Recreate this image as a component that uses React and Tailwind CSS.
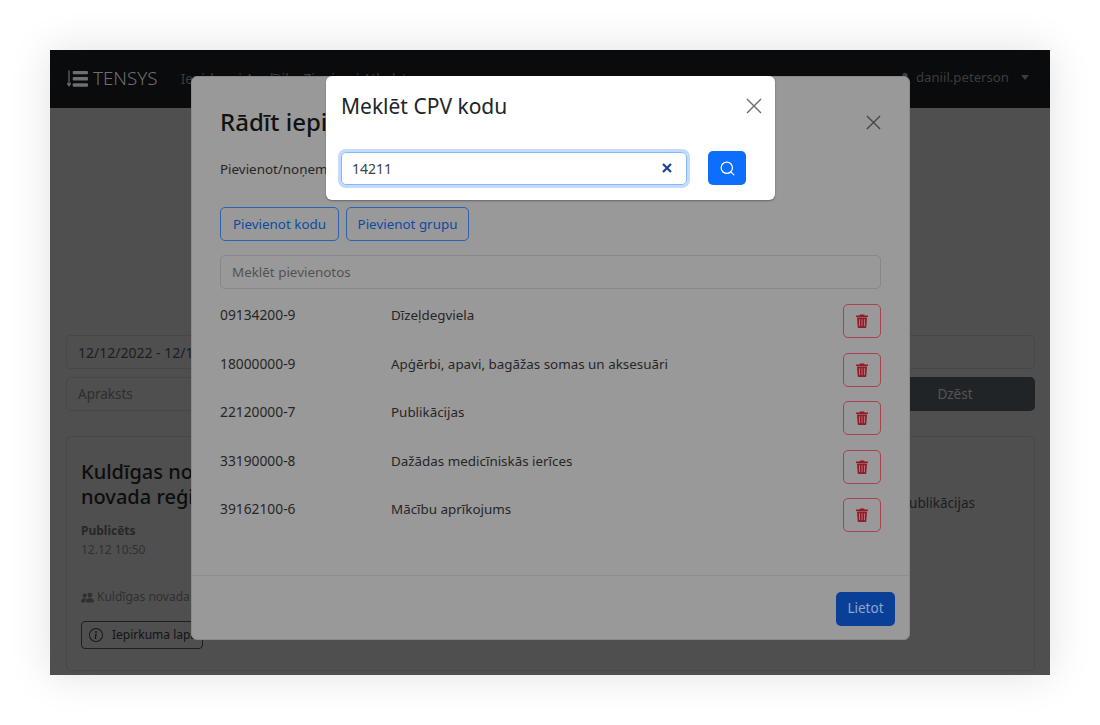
import React from 'react';
import { Search } from 'lucide-react';
import { BsPeopleFill, BsInfoCircle, BsPersonFill } from 'react-icons/bs';

const codes = [
  ['09134200-9', 'Dīzeļdegviela'],
  ['18000000-9', 'Apģērbi, apavi, bagāžas somas un aksesuāri'],
  ['22120000-7', 'Publikācijas'],
  ['33190000-8', 'Dažādas medicīniskās ierīces'],
  ['39162100-6', 'Mācību aprīkojums'],
];

function CloseIcon({ className }) {
  return (
    <svg viewBox="0 0 16 16" className={className} fill="none" stroke="currentColor" strokeWidth="1.4">
      <path d="M1 1l14 14M15 1L1 15" />
    </svg>
  );
}

function TrashIcon() {
  return (
    <svg viewBox="0 0 12 14" className="w-[12px] h-[14px]">
      <path d="M4 0.5h4l.6 1H12V3H0V1.5h3.4z" fill="#941a28" />
      <path d="M1 3.6h10l-.7 9.4a1 1 0 0 1-1 1H2.7a1 1 0 0 1-1-1z" fill="#941a28" />
      <path d="M3.5 5.2v7M6 5.2v7M8.5 5.2v7" stroke="#a8737a" strokeWidth="1" />
    </svg>
  );
}

function Logo() {
  return (
    <div className="flex items-center gap-[5px] text-[#6e6f70]">
      <svg viewBox="0 0 22 18" className="w-[21px] h-[18px]" fill="currentColor">
        <path d="M1.5 0h1.2v14l1.3-1.6v2L2.1 17 .2 14.4v-2l1.3 1.6z" />
        <rect x="6" y="0.5" width="16" height="3.6" rx="1" />
        <rect x="6" y="7" width="16" height="3.6" rx="1" />
        <rect x="6" y="13.5" width="16" height="3.6" rx="1" />
      </svg>
      <span className="text-[18.8px] leading-none font-light mt-[-2px]">TENSYS</span>
    </div>
  );
}

function Background() {
  return (
    <div className="flex flex-col h-full text-[13.5px]">
      <div className="h-[58px] bg-[#0a0b0d] flex items-center pl-[17px] pr-[21px] shrink-0">
        <Logo />
        <span className="ml-[23px] text-[#3c3d3f] whitespace-nowrap">Iepirkumi Analītika Ziņojumi Atbalsts</span>
        <span className="ml-auto flex items-center gap-[4px] text-[#3c3d3f] mt-[-2px] text-[13.2px]">
          <BsPersonFill className="w-[14px] h-[14px]" />
          daniil.peterson
          <span className="ml-[8px] w-0 h-0 border-x-[4px] border-x-transparent border-t-[5px] border-t-[#3c3d3f]" />
        </span>
      </div>
      <div className="flex-1 pt-[227px] pl-[16px] pr-[15px] pb-[4px] flex flex-col">
        <div className="h-[34px] border border-[#474747] rounded-[5px] flex items-center px-[11px] text-[14px] text-[#1d1d1d]">12/12/2022 - 12/12/2022</div>
        <div className="mt-[8px] flex gap-[8px]">
          <div className="flex-1 h-[34px] border border-[#474747] rounded-[5px] flex items-center px-[11px] text-[#2e2e2e]">Apraksts</div>
          <div className="w-[160px] h-[34px] rounded-[5px] bg-[#212426] flex items-center justify-center text-[#555657]">Dzēst</div>
        </div>
        <div className="mt-[25px] flex-1 border border-[#474747] rounded-[5px] pt-[22px] px-[14px] relative flex">
          <div className="flex-1">
            <h2 className="text-[20px] leading-[25px] font-medium text-[#0d0d0d]">Kuldīgas novada pašvaldība<br />novada reģionālā</h2>
            <div className="mt-[12px] text-[12px] leading-[19px] font-bold text-[#272727]">Publicēts</div>
            <div className="text-[12px] leading-[19px] text-[#2f2f2f]">12.12 10:50</div>
            <div className="mt-[29px] flex items-center gap-[3px] text-[12px] text-[#2f2f2f]">
              <BsPeopleFill className="w-[13px] h-[13px]" />
              Kuldīgas novada pašvaldība
            </div>
            <div className="mt-[15px] w-[122px] h-[28px] border border-[#1f1f1f] rounded-[4px] flex items-center pl-[7px] gap-[9px] text-[12px] text-[#131313]">
              <BsInfoCircle className="w-[14px] h-[14px]" />
              Iepirkuma lapa
            </div>
          </div>
          <div className="text-[13.5px] text-[#1d1d1d] pt-[34px] pr-[45px]">Publikācijas</div>
        </div>
      </div>
    </div>
  );
}

function ListModal() {
  return (
    <div className="absolute left-[141px] top-[26px] w-[719px] h-[564px] bg-[#999999] rounded-[6px] border border-[#8a8a8a] flex flex-col text-[13.4px] text-[#262626]">
      <div className="px-[28px] flex-1">
        <div className="flex items-center justify-between pt-[28px]">
          <h1 className="text-[24px] leading-[34px] font-medium text-[#121212]">Rādīt iepirkumus</h1>
          <CloseIcon className="w-[15px] h-[15px] text-[#454545]" />
        </div>
        <p className="mt-[20px] leading-[20px]">Pievienot/noņemt CPV kodus</p>
        <div className="mt-[28px] flex gap-[7px]">
          <button className="h-[34px] w-[119px] border border-[#2f62ad] rounded-[5px] text-[#0f4aa3]">Pievienot kodu</button>
          <button className="h-[34px] w-[123px] border border-[#2f62ad] rounded-[5px] text-[#0f4aa3]">Pievienot grupu</button>
        </div>
        <div className="mt-[14px] h-[34px] border border-[#878787] rounded-[5px] flex items-center px-[11px] text-[#525252]">Meklēt pievienotos</div>
        <div className="mt-[15px] flex flex-col gap-[14.5px]">
          {codes.map(([code, name]) => (
            <div key={code} className="flex h-[34px]">
              <span className="w-[171px] leading-[22px] text-[13.8px]">{code}</span>
              <span className="flex-1 leading-[22px]">{name}</span>
              <span className="w-[38px] h-[34px] border border-[#a8434f] rounded-[5px] flex items-center justify-center">
                <TrashIcon />
              </span>
            </div>
          ))}
        </div>
      </div>
      <div className="h-[64px] border-t border-[#8d8d8d] flex items-center justify-end pr-[14px] pt-[2px]">
        <button className="w-[59px] h-[34px] rounded-[5px] bg-[#0a3f97] text-[#8ea7cf] text-[13.5px]">Lietot</button>
      </div>
    </div>
  );
}

function SearchModal() {
  return (
    <div className="absolute left-[276px] top-[26px] w-[449px] h-[124px] bg-white rounded-[6px] shadow-[0_1px_2px_rgba(0,0,0,0.35)] px-[15px] pt-[15px] text-[14px]">
      <div className="flex items-center justify-between">
        <h3 className="text-[21px] leading-[30px] text-[#212529]">Meklēt CPV kodu</h3>
        <CloseIcon className="w-[16px] h-[16px] mr-[-2px] text-[#6a6a6a]" />
      </div>
      <div className="mt-[30px] flex items-center">
        <div className="w-[346px] h-[33px] border border-[#86b7fe] rounded-[5px] ring-[3px] ring-[#c2dbfe] flex items-center pl-[10px] pr-[14px] text-[#3d4246]">
          <span className="flex-1">14211</span>
          <svg viewBox="0 0 10 10" className="w-[10px] h-[10px] text-[#1c4587]" fill="none" stroke="currentColor" strokeWidth="2.2">
            <path d="M1 1l8 8M9 1L1 9" />
          </svg>
        </div>
        <button className="ml-[21px] w-[38px] h-[34px] rounded-[5px] bg-[#0d6efd] flex items-center justify-center text-white">
          <Search className="w-[17px] h-[17px]" strokeWidth={1.7} />
        </button>
      </div>
    </div>
  );
}

export default function App() {
  return (
    <div className="w-[1100px] h-[725px] bg-white p-[50px]" style={{ fontFamily: '"Noto Sans", sans-serif' }}>
      <div className="relative w-[1000px] h-[625px] bg-[#4f4f4f] overflow-hidden shadow-[0_0_40px_rgba(0,0,0,0.12)]">
        <Background />
        <ListModal />
        <SearchModal />
      </div>
    </div>
  );
}
